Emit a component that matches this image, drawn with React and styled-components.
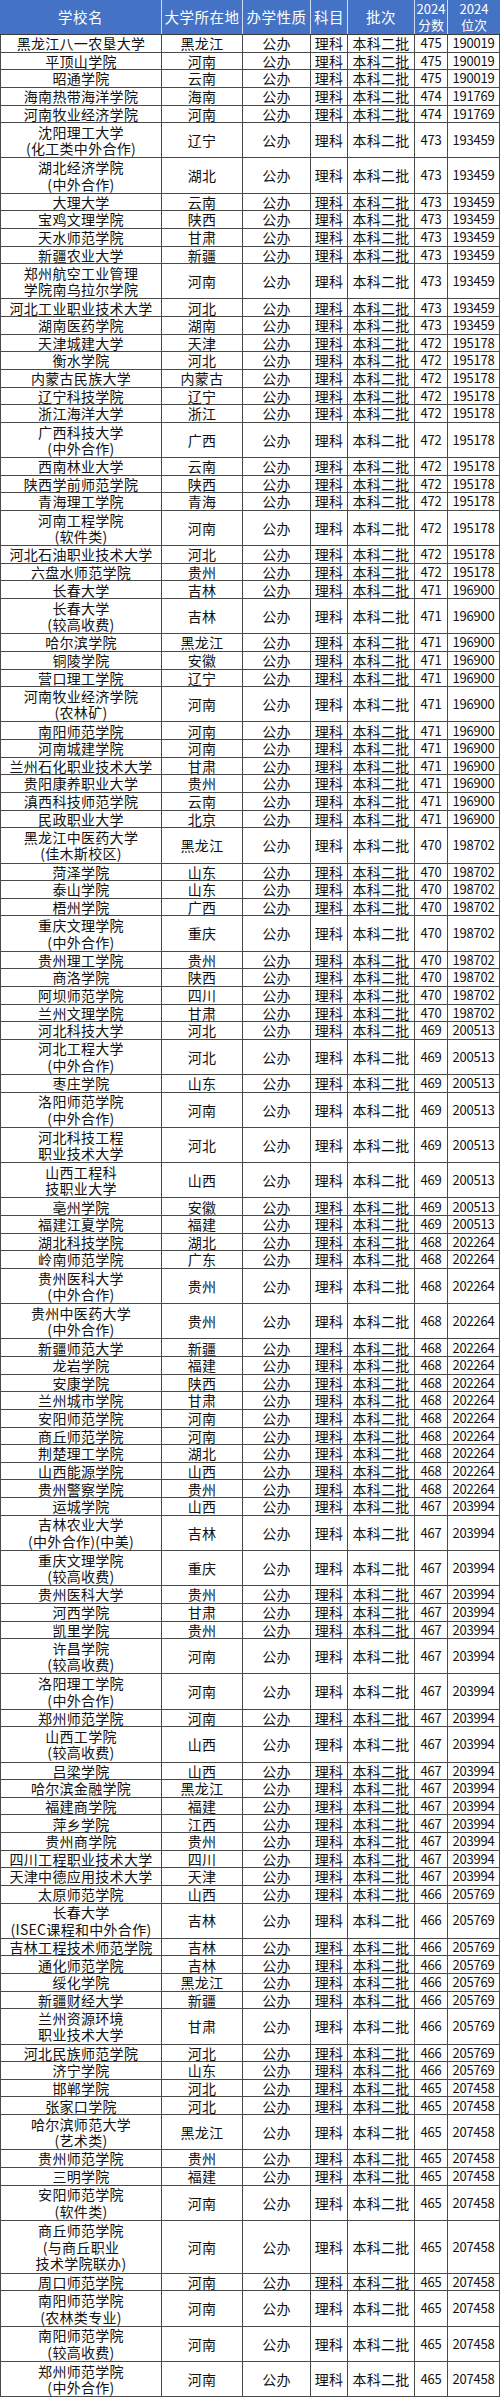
import React from "react";
import styled, { createGlobalStyle } from "styled-components";

const LINE = 2363 / 134;
const COLS = "162px 81px 68px 37px 67px 33px 52px";

const GlobalStyle = createGlobalStyle`
  html, body { margin: 0; padding: 0; background: #fff; }
  body { font-family: "Noto Sans CJK SC", "Noto Sans", sans-serif; color: #111; }
`;

const Table = styled.div`
  width: 500px;
  display: flex;
  flex-direction: column;
`;

const HeaderRow = styled.div`
  display: grid;
  grid-template-columns: ${COLS};
  height: 35px;
  background: #4472c4;
  color: #fff;
  border-bottom: 1px solid #3a3a3a;
  box-sizing: border-box;
`;

const HeaderCell = styled.div`
  display: flex;
  align-items: center;
  justify-content: center;
  text-align: center;
  font-size: ${(p) => (p.$small ? "13px" : "14.5px")};
  line-height: 16px;
  white-space: pre-line;
  border-right: ${(p) => (p.$last ? "none" : "1px solid rgba(255,255,255,0.75)")};
  letter-spacing: ${(p) => (p.$small ? "0" : "0.5px")};
  box-sizing: border-box;
`;

const Row = styled.div`
  display: grid;
  grid-template-columns: ${COLS};
  height: ${(p) => p.$lines * LINE}px;
`;

const Cell = styled.div`
  display: flex;
  align-items: center;
  justify-content: center;
  text-align: center;
  white-space: pre-line;
  font-size: ${(p) => (p.$num ? "13px" : "14px")};
  line-height: 16.4px;
  letter-spacing: ${(p) => (p.$num ? "-0.2px" : "0.3px")};
  border-right: 1px solid #4a4a4a;
  border-bottom: 1px solid #4a4a4a;
  border-left: ${(p) => (p.$first ? "1px solid #4a4a4a" : "none")};
  box-sizing: border-box;
`;

const data = [
  ["黑龙江八一农垦大学", "黑龙江", 475, 190019],
  ["平顶山学院", "河南", 475, 190019],
  ["昭通学院", "云南", 475, 190019],
  ["海南热带海洋学院", "海南", 474, 191769],
  ["河南牧业经济学院", "河南", 474, 191769],
  ["沈阳理工大学\n(化工类中外合作)", "辽宁", 473, 193459],
  ["湖北经济学院\n(中外合作)", "湖北", 473, 193459],
  ["大理大学", "云南", 473, 193459],
  ["宝鸡文理学院", "陕西", 473, 193459],
  ["天水师范学院", "甘肃", 473, 193459],
  ["新疆农业大学", "新疆", 473, 193459],
  ["郑州航空工业管理\n学院南乌拉尔学院", "河南", 473, 193459],
  ["河北工业职业技术大学", "河北", 473, 193459],
  ["湖南医药学院", "湖南", 473, 193459],
  ["天津城建大学", "天津", 472, 195178],
  ["衡水学院", "河北", 472, 195178],
  ["内蒙古民族大学", "内蒙古", 472, 195178],
  ["辽宁科技学院", "辽宁", 472, 195178],
  ["浙江海洋大学", "浙江", 472, 195178],
  ["广西科技大学\n(中外合作)", "广西", 472, 195178],
  ["西南林业大学", "云南", 472, 195178],
  ["陕西学前师范学院", "陕西", 472, 195178],
  ["青海理工学院", "青海", 472, 195178],
  ["河南工程学院\n(软件类)", "河南", 472, 195178],
  ["河北石油职业技术大学", "河北", 472, 195178],
  ["六盘水师范学院", "贵州", 472, 195178],
  ["长春大学", "吉林", 471, 196900],
  ["长春大学\n(较高收费)", "吉林", 471, 196900],
  ["哈尔滨学院", "黑龙江", 471, 196900],
  ["铜陵学院", "安徽", 471, 196900],
  ["营口理工学院", "辽宁", 471, 196900],
  ["河南牧业经济学院\n(农林矿)", "河南", 471, 196900],
  ["南阳师范学院", "河南", 471, 196900],
  ["河南城建学院", "河南", 471, 196900],
  ["兰州石化职业技术大学", "甘肃", 471, 196900],
  ["贵阳康养职业大学", "贵州", 471, 196900],
  ["滇西科技师范学院", "云南", 471, 196900],
  ["民政职业大学", "北京", 471, 196900],
  ["黑龙江中医药大学\n(佳木斯校区)", "黑龙江", 470, 198702],
  ["菏泽学院", "山东", 470, 198702],
  ["泰山学院", "山东", 470, 198702],
  ["梧州学院", "广西", 470, 198702],
  ["重庆文理学院\n(中外合作)", "重庆", 470, 198702],
  ["贵州理工学院", "贵州", 470, 198702],
  ["商洛学院", "陕西", 470, 198702],
  ["阿坝师范学院", "四川", 470, 198702],
  ["兰州文理学院", "甘肃", 470, 198702],
  ["河北科技大学", "河北", 469, 200513],
  ["河北工程大学\n(中外合作)", "河北", 469, 200513],
  ["枣庄学院", "山东", 469, 200513],
  ["洛阳师范学院\n(中外合作)", "河南", 469, 200513],
  ["河北科技工程\n职业技术大学", "河北", 469, 200513],
  ["山西工程科\n技职业大学", "山西", 469, 200513],
  ["亳州学院", "安徽", 469, 200513],
  ["福建江夏学院", "福建", 469, 200513],
  ["湖北科技学院", "湖北", 468, 202264],
  ["岭南师范学院", "广东", 468, 202264],
  ["贵州医科大学\n(中外合作)", "贵州", 468, 202264],
  ["贵州中医药大学\n(中外合作)", "贵州", 468, 202264],
  ["新疆师范大学", "新疆", 468, 202264],
  ["龙岩学院", "福建", 468, 202264],
  ["安康学院", "陕西", 468, 202264],
  ["兰州城市学院", "甘肃", 468, 202264],
  ["安阳师范学院", "河南", 468, 202264],
  ["商丘师范学院", "河南", 468, 202264],
  ["荆楚理工学院", "湖北", 468, 202264],
  ["山西能源学院", "山西", 468, 202264],
  ["贵州警察学院", "贵州", 468, 202264],
  ["运城学院", "山西", 467, 203994],
  ["吉林农业大学\n(中外合作)(中美)", "吉林", 467, 203994],
  ["重庆文理学院\n(较高收费)", "重庆", 467, 203994],
  ["贵州医科大学", "贵州", 467, 203994],
  ["河西学院", "甘肃", 467, 203994],
  ["凯里学院", "贵州", 467, 203994],
  ["许昌学院\n(较高收费)", "河南", 467, 203994],
  ["洛阳理工学院\n(中外合作)", "河南", 467, 203994],
  ["郑州师范学院", "河南", 467, 203994],
  ["山西工学院\n(较高收费)", "山西", 467, 203994],
  ["吕梁学院", "山西", 467, 203994],
  ["哈尔滨金融学院", "黑龙江", 467, 203994],
  ["福建商学院", "福建", 467, 203994],
  ["萍乡学院", "江西", 467, 203994],
  ["贵州商学院", "贵州", 467, 203994],
  ["四川工程职业技术大学", "四川", 467, 203994],
  ["天津中德应用技术大学", "天津", 467, 203994],
  ["太原师范学院", "山西", 466, 205769],
  ["长春大学\n(ISEC课程和中外合作)", "吉林", 466, 205769],
  ["吉林工程技术师范学院", "吉林", 466, 205769],
  ["通化师范学院", "吉林", 466, 205769],
  ["绥化学院", "黑龙江", 466, 205769],
  ["新疆财经大学", "新疆", 466, 205769],
  ["兰州资源环境\n职业技术大学", "甘肃", 466, 205769],
  ["河北民族师范学院", "河北", 466, 205769],
  ["济宁学院", "山东", 466, 205769],
  ["邯郸学院", "河北", 465, 207458],
  ["张家口学院", "河北", 465, 207458],
  ["哈尔滨师范大学\n(艺术类)", "黑龙江", 465, 207458],
  ["贵州师范学院", "贵州", 465, 207458],
  ["三明学院", "福建", 465, 207458],
  ["安阳师范学院\n(软件类)", "河南", 465, 207458],
  ["商丘师范学院\n(与商丘职业\n技术学院联办)", "河南", 465, 207458],
  ["周口师范学院", "河南", 465, 207458],
  ["南阳师范学院\n(农林类专业)", "河南", 465, 207458],
  ["南阳师范学院\n(较高收费)", "河南", 465, 207458],
  ["郑州师范学院\n(中外合作)", "河南", 465, 207458],
];

const headers = [
  { t: "学校名" },
  { t: "大学所在地" },
  { t: "办学性质" },
  { t: "科目" },
  { t: "批次" },
  { t: "2024\n分数", small: true },
  { t: "2024\n位次", small: true, last: true },
];

export default function App() {
  return (
    <>
      <GlobalStyle />
      <Table>
        <HeaderRow>
          {headers.map((h) => (
            <HeaderCell key={h.t} $small={h.small} $last={h.last}>
              {h.t}
            </HeaderCell>
          ))}
        </HeaderRow>
        {data.map(([name, loc, score, rank], i) => (
          <Row key={i} $lines={name.split("\n").length}>
            <Cell $first>{name}</Cell>
            <Cell>{loc}</Cell>
            <Cell>公办</Cell>
            <Cell>理科</Cell>
            <Cell>本科二批</Cell>
            <Cell $num>{score}</Cell>
            <Cell $num>{rank}</Cell>
          </Row>
        ))}
      </Table>
    </>
  );
}
